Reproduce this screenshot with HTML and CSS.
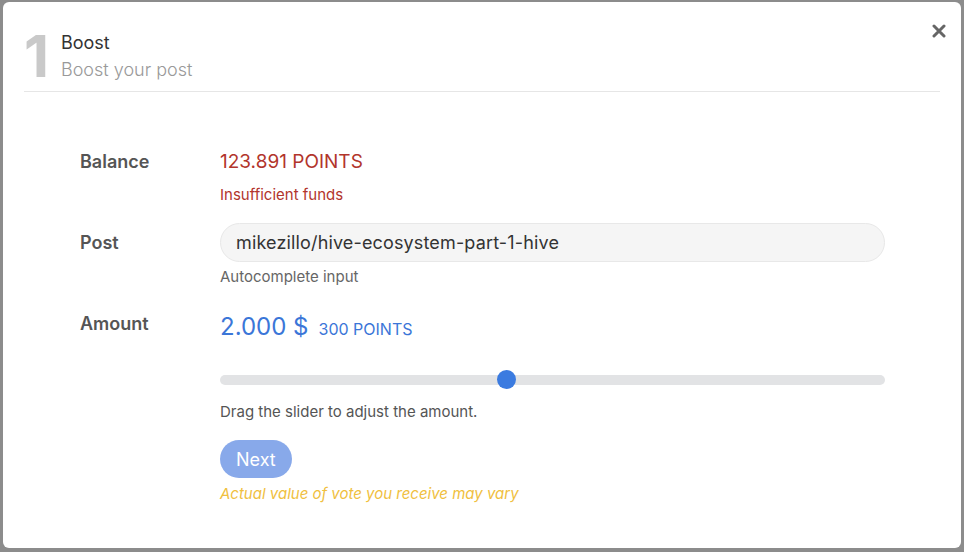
FILE: index.html
```html
<!DOCTYPE html>
<html lang="en">
<head>
    <meta charset="UTF-8">
    <meta name="viewport" content="width=device-width, initial-scale=1.0">
    <title>Boost</title>
    <link rel="stylesheet" href="styles.css">
</head>
<body>
    <div class="modal">
        <button class="close" type="button" aria-label="Close">
            <svg width="14" height="14" viewBox="0 0 14 14">
                <path d="M2 2 L12 12 M12 2 L2 12" stroke="#666" stroke-width="3" stroke-linecap="round"/>
            </svg>
        </button>
        <div class="modal-header">
            <div class="step-num">1</div>
            <div class="step-text">
                <div class="step-title">Boost</div>
                <div class="step-sub">Boost your post</div>
            </div>
        </div>

        <div class="modal-body">
            <div class="form-row">
                <label class="form-label">Balance</label>
                <div class="form-field">
                    <div class="balance">123.891 POINTS</div>
                    <div class="error">Insufficient funds</div>
                </div>
            </div>

            <div class="form-row form-row-post">
                <label class="form-label label-input" for="post">Post</label>
                <div class="form-field">
                    <input type="text" id="post" class="post-input" value="mikezillo/hive-ecosystem-part-1-hive">
                    <div class="hint">Autocomplete input</div>
                </div>
            </div>

            <div class="form-row">
                <label class="form-label label-amount">Amount</label>
                <div class="form-field">
                    <div class="amount">2.000 $<span class="amount-points">300 POINTS</span></div>
                    <div class="slider">
                        <div class="slider-thumb" style="left: 43%"></div>
                    </div>
                    <div class="hint hint-dark">Drag the slider to adjust the amount.</div>
                    <button class="next-btn" type="button" disabled>Next</button>
                    <div class="note">Actual value of vote you receive may vary</div>
                </div>
            </div>
        </div>
    </div>
</body>
</html>
```

FILE: styles.css
```css
body {
    margin: 0;
    padding: 2px 3px 4px 3px;
    background-color: #8c8c8c;
    font-family: Inter, "Noto Sans", Arial, sans-serif;
    height: 552px;
    box-sizing: border-box;
}
.modal {
    position: relative;
    background-color: #fff;
    border-radius: 6px;
    height: 100%;
    padding: 0 21px;
    box-sizing: border-box;
}
.close {
    position: absolute;
    top: 22px;
    right: 15px;
    border: none;
    background: none;
    padding: 0;
    line-height: 0;
    cursor: pointer;
}
.modal-header {
    display: flex;
    align-items: flex-start;
    padding-top: 26px;
    padding-bottom: 7px;
    border-bottom: 1px solid #e6e6e6;
}
.step-num {
    font-size: 58px;
    font-weight: bold;
    line-height: 56px;
    color: #c9c9c9;
    width: 37px;
}
.step-text {
    padding-top: 2px;
}
.step-title {
    font-size: 18px;
    color: #333;
    line-height: 26px;
}
.step-sub {
    font-size: 18px;
    color: #999;
    font-weight: 300;
    line-height: 26px;
    margin-top: 1px;
}
.modal-body {
    padding: 57px 0 0 56px;
}
.form-row {
    display: flex;
    margin-bottom: 18px;
}
.form-row-post {
    margin-bottom: 24px;
}
.form-label {
    width: 140px;
    flex-shrink: 0;
    font-size: 18px;
    font-weight: 600;
    color: #555;
    line-height: 26px;
}
.label-input {
    line-height: 39px;
}
.label-amount {
    line-height: 28px;
}
.form-field {
    width: 665px;
}
.balance {
    font-size: 19px;
    color: #b2352c;
    line-height: 26px;
}
.error {
    font-size: 15px;
    color: #b2352c;
    margin-top: 10px;
    line-height: 20px;
}
.post-input {
    width: 100%;
    height: 39px;
    box-sizing: border-box;
    border: 1px solid #e8e8e8;
    border-radius: 20px;
    background-color: #f5f5f5;
    padding: 0 15px;
    font-family: inherit;
    font-size: 18px;
    letter-spacing: 0.15px;
    color: #333;
    outline: none;
}
.hint {
    font-size: 15px;
    color: #666;
    margin-top: 6px;
    line-height: 18px;
}
.hint-dark {
    color: #555;
    margin-top: 18px;
}
.amount {
    font-size: 24px;
    color: #3b76d8;
    line-height: 30px;
    margin-top: 2px;
}
.amount-points {
    font-size: 16px;
    margin-left: 10px;
}
.slider {
    position: relative;
    height: 10px;
    border-radius: 5px;
    background-color: #e2e3e5;
    margin-top: 31px;
}
.slider-thumb {
    position: absolute;
    top: -5px;
    width: 19px;
    height: 19px;
    margin-left: -9px;
    border-radius: 50%;
    background-color: #3b7be0;
}
.next-btn {
    display: block;
    margin-top: 19px;
    height: 38px;
    padding: 0 16px;
    border: none;
    border-radius: 19px;
    background-color: #88a9ea;
    color: #fff;
    font-family: inherit;
    font-size: 18px;
}
.note {
    font-size: 15px;
    font-style: italic;
    color: #f0c03e;
    margin-top: 6px;
}
```
